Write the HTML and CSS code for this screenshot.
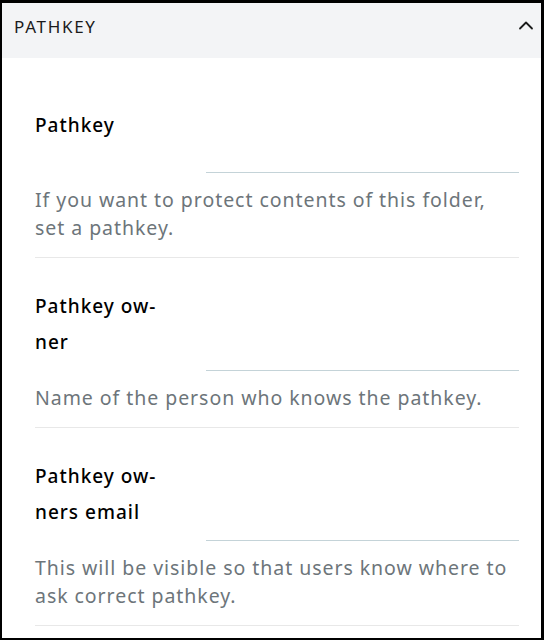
FILE: index.html
```html
<!DOCTYPE html>
<html lang="en">
<head>
<meta charset="utf-8">
<title>Pathkey</title>
<link rel="stylesheet" href="styles.css">
</head>
<body>
<div class="panel">
  <div class="panel-header">
    <span class="panel-title">PATHKEY</span>
    <svg class="chevron" width="16" height="10" viewBox="0 0 16 10" aria-hidden="true">
      <path d="M2 8.5 L8 2.5 L14 8.5" fill="none" stroke="#1b1b1b" stroke-width="1.8" stroke-linecap="round" stroke-linejoin="round"/>
    </svg>
  </div>
  <div class="panel-body">
    <div class="field">
      <div class="field-row">
        <div class="field-label">Pathkey</div>
        <div class="field-input"></div>
      </div>
      <div class="field-help">If you want to protect contents of this folder, set a pathkey.</div>
    </div>
    <div class="field">
      <div class="field-row">
        <div class="field-label">Pathkey ow&shy;ner</div>
        <div class="field-input"></div>
      </div>
      <div class="field-help">Name of the person who knows the pathkey.</div>
    </div>
    <div class="field">
      <div class="field-row">
        <div class="field-label">Pathkey ow&shy;ners email</div>
        <div class="field-input"></div>
      </div>
      <div class="field-help">This will be visible so that users know where to ask correct pathkey.</div>
    </div>
  </div>
</div>
</body>
</html>
```
FILE: styles.css
```css
html, body {
  margin: 0;
  padding: 0;
  background: #ffffff;
}

body {
  font-family: "Noto Sans", "Open Sans", sans-serif;
  color: #000;
}

.panel {
  width: 544px;
  height: 640px;
  box-sizing: border-box;
  border: 2px solid #000;
  border-top-width: 3px;
  border-right-width: 3px;
  overflow: hidden;
  background: #fff;
}

.panel-header {
  height: 55px;
  background: #f3f4f6;
  display: flex;
  align-items: center;
  justify-content: space-between;
  padding: 0 7px 0 12px;
}

.panel-title {
  font-size: 17px;
  color: #1b1b1b;
  letter-spacing: 1.7px;
  margin-top: -8px;
}

.chevron {
  display: block;
  margin-top: -12px;
}

.panel-body {
  padding: 19px 22px 0 33px;
}

.field {
  padding: 30px 0 15px;
  border-bottom: 1px solid #e8e8e8;
}

.field-row {
  display: flex;
  min-height: 66px;
}

.field-label {
  width: 141px;
  padding-right: 30px;
  padding-bottom: 11px;
  flex: none;
  font-size: 19px;
  font-weight: 500;
  letter-spacing: 1px;
  line-height: 36px;
  color: #000;
}

.field-input {
  flex: 1;
  align-self: flex-end;
  height: 36px;
  border-bottom: 1px solid #c4d3d8;
}

.field-help {
  margin-top: 13px;
  font-size: 19.5px;
  letter-spacing: 0.95px;
  line-height: 28px;
  color: #6d757a;
}
```
